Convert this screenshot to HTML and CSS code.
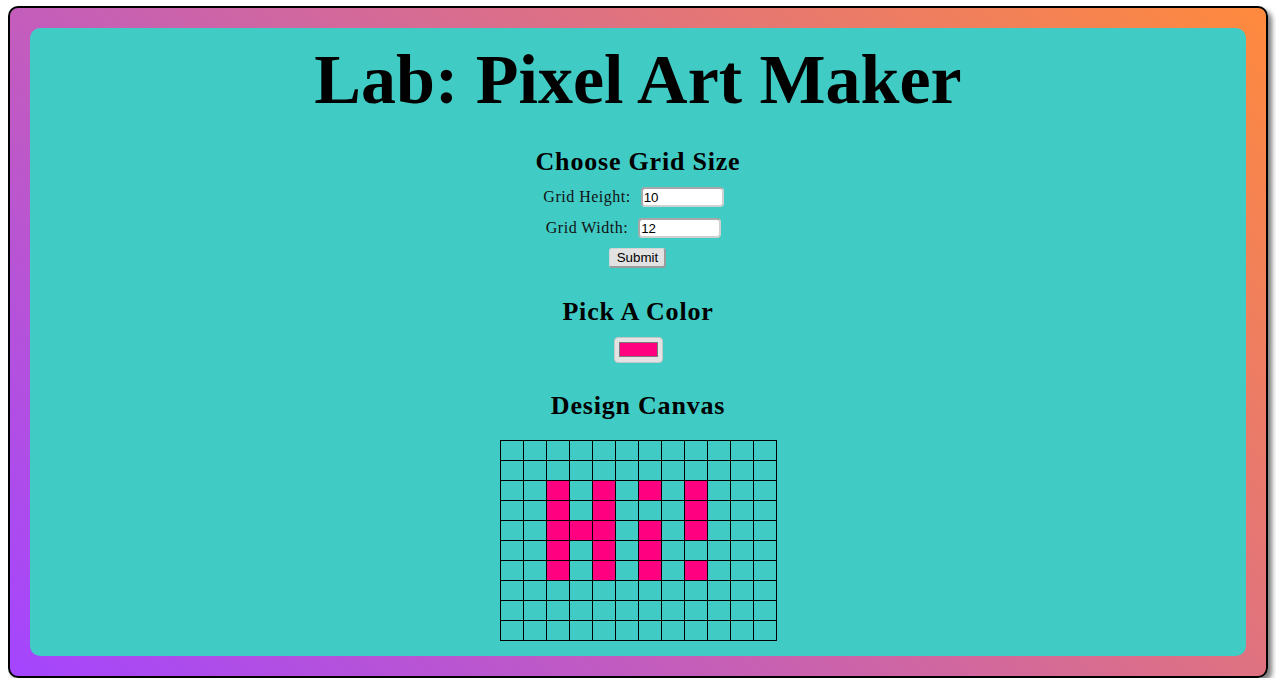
FILE: index.html
```html
<!DOCTYPE html>
<html lang="en">
<head>
<meta charset="utf-8">
<title>Lab: Pixel Art Maker</title>
<link rel="stylesheet" href="styles.css">
</head>
<body>
<div class="frame">
  <main class="panel">
    <h1 class="title">Lab: Pixel Art Maker</h1>

    <h2 class="section section-first">Choose Grid Size</h2>
    <form class="size-form">
      <div class="row">
        <label class="label" for="h">Grid Height:</label>
        <input class="num" id="h" type="text" value="10">
      </div>
      <div class="row row-next">
        <label class="label" for="w">Grid Width:</label>
        <input class="num" id="w" type="text" value="12">
      </div>
      <button class="submit" type="button">Submit</button>
    </form>

    <h2 class="section section-color">Pick A Color</h2>
    <div class="picker"><div class="swatch"></div></div>

    <h2 class="section section-canvas">Design Canvas</h2>
    <div class="canvas">
      <div class="c"></div><div class="c"></div><div class="c"></div><div class="c"></div><div class="c"></div><div class="c"></div><div class="c"></div><div class="c"></div><div class="c"></div><div class="c"></div><div class="c"></div><div class="c"></div>
      <div class="c"></div><div class="c"></div><div class="c"></div><div class="c"></div><div class="c"></div><div class="c"></div><div class="c"></div><div class="c"></div><div class="c"></div><div class="c"></div><div class="c"></div><div class="c"></div>
      <div class="c"></div><div class="c"></div><div class="c p"></div><div class="c"></div><div class="c p"></div><div class="c"></div><div class="c p"></div><div class="c"></div><div class="c p"></div><div class="c"></div><div class="c"></div><div class="c"></div>
      <div class="c"></div><div class="c"></div><div class="c p"></div><div class="c"></div><div class="c p"></div><div class="c"></div><div class="c"></div><div class="c"></div><div class="c p"></div><div class="c"></div><div class="c"></div><div class="c"></div>
      <div class="c"></div><div class="c"></div><div class="c p"></div><div class="c p"></div><div class="c p"></div><div class="c"></div><div class="c p"></div><div class="c"></div><div class="c p"></div><div class="c"></div><div class="c"></div><div class="c"></div>
      <div class="c"></div><div class="c"></div><div class="c p"></div><div class="c"></div><div class="c p"></div><div class="c"></div><div class="c p"></div><div class="c"></div><div class="c"></div><div class="c"></div><div class="c"></div><div class="c"></div>
      <div class="c"></div><div class="c"></div><div class="c p"></div><div class="c"></div><div class="c p"></div><div class="c"></div><div class="c p"></div><div class="c"></div><div class="c p"></div><div class="c"></div><div class="c"></div><div class="c"></div>
      <div class="c"></div><div class="c"></div><div class="c"></div><div class="c"></div><div class="c"></div><div class="c"></div><div class="c"></div><div class="c"></div><div class="c"></div><div class="c"></div><div class="c"></div><div class="c"></div>
      <div class="c"></div><div class="c"></div><div class="c"></div><div class="c"></div><div class="c"></div><div class="c"></div><div class="c"></div><div class="c"></div><div class="c"></div><div class="c"></div><div class="c"></div><div class="c"></div>
      <div class="c"></div><div class="c"></div><div class="c"></div><div class="c"></div><div class="c"></div><div class="c"></div><div class="c"></div><div class="c"></div><div class="c"></div><div class="c"></div><div class="c"></div><div class="c"></div>
    </div>
  </main>
</div>
</body>
</html>
```
FILE: styles.css
```css
html {
  background: #ffffff;
}

body {
  margin: 6px 8px 0;
  font-family: "Liberation Serif", "Times New Roman", serif;
  color: #000;
}

.frame {
  box-sizing: border-box;
  width: 1260px;
  height: 672px;
  border: 2px solid #000;
  border-radius: 10px;
  padding: 20px;
  background: linear-gradient(45deg, #a445ff 0%, #ff8a3d 100%);
  box-shadow: 4px 4px 5px rgba(0, 0, 0, 0.5);
}

.panel {
  box-sizing: border-box;
  height: 100%;
  background: #41cbc5;
  border-radius: 10px;
  padding-top: 12px;
  display: flex;
  flex-direction: column;
  align-items: center;
}

.title {
  margin: 0;
  font: bold 70px/80px "Liberation Serif", "Times New Roman", serif;
  color: #000;
}

.section {
  margin: 0 0 -1px;
  font: bold 26px/30px "Liberation Serif", "Times New Roman", serif;
  letter-spacing: 0.8px;
  color: #000;
}

.section-first {
  margin-top: 27px;
}

.section-color {
  margin-top: 29px;
}

.section-canvas {
  margin-top: 28px;
}

.size-form {
  margin: 11px 0 0;
  display: flex;
  flex-direction: column;
  align-items: center;
}

.row {
  display: flex;
  align-items: center;
  gap: 10px;
  height: 20px;
  padding-right: 9px;
}

.row-next {
  margin-top: 11px;
}

.label {
  font: 16px/20px "Liberation Serif", "Times New Roman", serif;
  letter-spacing: 0.5px;
  color: #111;
}

.num {
  box-sizing: border-box;
  width: 83px;
  height: 20px;
  margin: 0;
  padding: 0 1px;
  border: 2px solid #a9a9a9;
  border-right-color: #d0d0d0;
  border-bottom-color: #d0d0d0;
  border-radius: 4px;
  background: #fff;
  font: 13.33px "Liberation Sans", Arial, sans-serif;
  color: #000;
  outline: none;
}

.submit {
  box-sizing: border-box;
  width: 57px;
  height: 20px;
  margin-top: 10px;
  padding: 0;
  border-style: solid;
  border-width: 1px 2px 2px 1px;
  border-color: #d4d4d4 #9b9b9b #9b9b9b #d4d4d4;
  border-radius: 3px;
  background: #e2e2e2;
  font: 13.33px "Liberation Sans", Arial, sans-serif;
  color: #000;
}

.picker {
  box-sizing: border-box;
  width: 49px;
  height: 26px;
  margin-top: 11px;
  padding: 4px 4px 5px;
  border: 1px solid #c6c6c6;
  border-radius: 4px;
  background: #e3e3e3;
}

.swatch {
  box-sizing: border-box;
  width: 39px;
  height: 15px;
  border: 1px solid #7a7a7a;
  background: #ff0080;
}

.canvas {
  margin-top: 20px;
  display: grid;
  grid-template-columns: repeat(12, 22px);
  grid-auto-rows: 19px;
  gap: 1px;
  padding: 1px;
  background: #000;
}

.c {
  background: #41cbc5;
}

.c.p {
  background: #ff0080;
}
```
